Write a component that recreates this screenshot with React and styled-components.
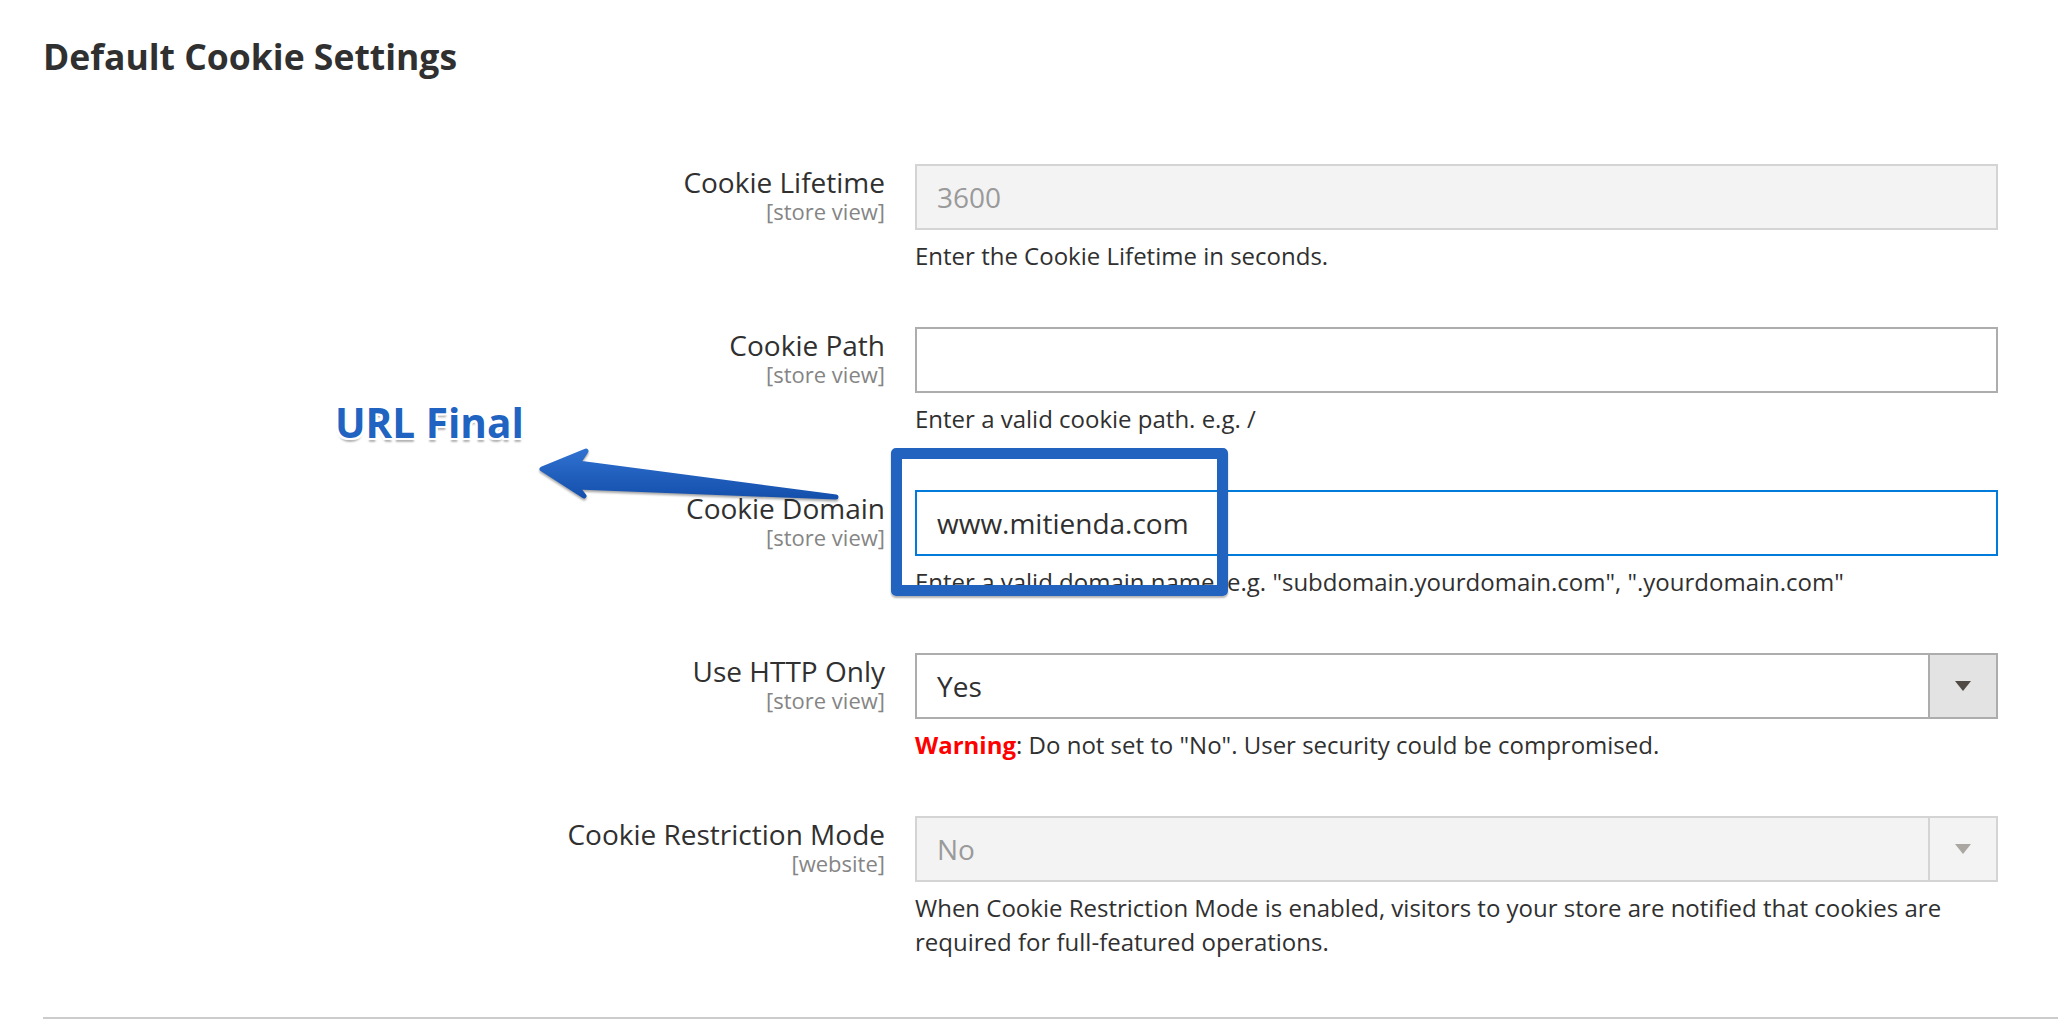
import React from "react";
import styled, { createGlobalStyle, css } from "styled-components";

const GlobalStyle = createGlobalStyle`
  body {
    margin: 0;
    background: #fff;
    font-family: "Open Sans", "Liberation Sans", sans-serif;
    color: #303030;
  }
`;

const fields = [
  {
    label: "Cookie Lifetime",
    scope: "[store view]",
    kind: "input",
    value: "3600",
    state: "disabled",
    note: "Enter the Cookie Lifetime in seconds.",
  },
  {
    label: "Cookie Path",
    scope: "[store view]",
    kind: "input",
    value: "",
    note: "Enter a valid cookie path. e.g. /",
  },
  {
    label: "Cookie Domain",
    scope: "[store view]",
    kind: "input",
    value: "www.mitienda.com",
    state: "focus",
    note: 'Enter a valid domain name. e.g. "subdomain.yourdomain.com", ".yourdomain.com"',
  },
  {
    label: "Use HTTP Only",
    scope: "[store view]",
    kind: "select",
    value: "Yes",
    warning: true,
    note: ': Do not set to "No". User security could be compromised.',
  },
  {
    label: "Cookie Restriction Mode",
    scope: "[website]",
    kind: "select",
    value: "No",
    state: "disabled",
    note: "When Cookie Restriction Mode is enabled, visitors to your store are notified that cookies are required for full-featured operations.",
  },
];

function App() {
  return (
    <Page>
      <GlobalStyle />
      <SectionTitle>Default Cookie Settings</SectionTitle>

      <Fieldset>
        {fields.map((f) => (
          <Field key={f.label}>
            <LabelCol>
              <Label>{f.label}</Label>
              <Scope>{f.scope}</Scope>
            </LabelCol>
            <Control>
              {f.kind === "input" ? (
                <TextInput
                  $state={f.state}
                  value={f.value}
                  readOnly
                  disabled={f.state === "disabled"}
                />
              ) : (
                <SelectBox $disabled={f.state === "disabled"}>
                  <SelectValue>{f.value}</SelectValue>
                  <SelectButton $disabled={f.state === "disabled"}>
                    <Caret $disabled={f.state === "disabled"} />
                  </SelectButton>
                </SelectBox>
              )}
              <Note>
                {f.warning && <Warn>Warning</Warn>}
                {f.note}
              </Note>
            </Control>
          </Field>
        ))}
      </Fieldset>

      <Divider />

      {/* annotation drawn over the screenshot */}
      <Callout>URL Final</Callout>
      <Arrow width="320" height="80" viewBox="0 0 320 80">
        <defs>
          <linearGradient id="arrowFill" x1="0" y1="0" x2="0" y2="1">
            <stop offset="0" stopColor="#2f70cf" />
            <stop offset="1" stopColor="#1550ad" />
          </linearGradient>
        </defs>
        <path
          d="M12,29 L56,11 L48,23 L306,57 L47,47 L54,56 Z"
          fill="url(#arrowFill)"
          stroke="url(#arrowFill)"
          strokeWidth="5"
          strokeLinejoin="round"
        />
      </Arrow>
      <Highlight />
    </Page>
  );
}

export default App;

//! Styled Elements
const Page = styled.div`
  position: relative;
  height: 1034px;
  overflow: hidden;
  padding-left: 43px;
  box-sizing: border-box;
`;

const SectionTitle = styled.h2`
  margin: 0;
  padding-top: 36px;
  font-size: 35.5px;
  line-height: 40px;
  font-weight: 700;
  color: #303030;
`;

const Fieldset = styled.div`
  display: flex;
  flex-direction: column;
  gap: 54px;
  margin-top: 88px;
`;

const Field = styled.div`
  display: grid;
  grid-template-columns: 842px 1083px;
  column-gap: 30px;
  align-items: start;
`;

const LabelCol = styled.div`
  text-align: right;
`;

const Label = styled.div`
  font-size: 28px;
  line-height: 36px;
  color: #303030;
`;

const Scope = styled.div`
  font-size: 22px;
  line-height: 23px;
  color: #858585;
`;

const Control = styled.div`
  display: flex;
  flex-direction: column;
`;

const TextInput = styled.input`
  box-sizing: border-box;
  width: 100%;
  height: 66px;
  margin: 0;
  padding: 0 20px;
  border: 2px solid #adadad;
  border-radius: 0;
  background: #fff;
  font-family: "Open Sans", "Liberation Sans", sans-serif;
  font-size: 28px;
  color: #303030;
  outline: none;

  ${(p) =>
    p.$state === "disabled" &&
    css`
      background: #f3f3f3;
      border-color: #d4d4d4;
      color: #9a9a9a;
      -webkit-text-fill-color: #9a9a9a;
      opacity: 1;
    `}

  ${(p) =>
    p.$state === "focus" &&
    css`
      border-color: #007bdb;
    `}
`;

const SelectBox = styled.div`
  box-sizing: border-box;
  display: flex;
  height: 66px;
  border: 2px solid ${(p) => (p.$disabled ? "#d4d4d4" : "#adadad")};
  background: ${(p) => (p.$disabled ? "#f3f3f3" : "#fff")};
  color: ${(p) => (p.$disabled ? "#9a9a9a" : "#303030")};
`;

const SelectValue = styled.div`
  flex: 1;
  display: flex;
  align-items: center;
  padding: 0 20px;
  font-size: 28px;
`;

const SelectButton = styled.div`
  width: 66px;
  display: flex;
  align-items: center;
  justify-content: center;
  border-left: 2px solid ${(p) => (p.$disabled ? "#d4d4d4" : "#adadad")};
  background: ${(p) => (p.$disabled ? "#f3f3f3" : "#e3e3e3")};
`;

const Caret = styled.span`
  width: 0;
  height: 0;
  border-left: 8px solid transparent;
  border-right: 8px solid transparent;
  border-top: 10px solid ${(p) => (p.$disabled ? "#aaa6a2" : "#514943")};
`;

const Note = styled.div`
  margin-top: 9px;
  font-size: 24px;
  line-height: 34px;
  color: #303030;
`;

const Warn = styled.strong`
  color: #f00;
  font-weight: 700;
`;

const Divider = styled.div`
  height: 2px;
  margin-top: 58px;
  background: #cccccc;
`;

const Callout = styled.div`
  position: absolute;
  left: 335px;
  top: 402px;
  font-size: 40.5px;
  line-height: 41px;
  font-weight: 700;
  color: #2163c1;
  text-shadow:
    2px 0 0 #fff, -2px 0 0 #fff, 0 2px 0 #fff, 0 -2px 0 #fff,
    2px 2px 0 #fff, -2px 2px 0 #fff, 2px -2px 0 #fff, -2px -2px 0 #fff,
    0 4px 2px rgba(0, 0, 0, 0.3);
`;

const Arrow = styled.svg`
  position: absolute;
  left: 530px;
  top: 440px;
  overflow: visible;
  filter: drop-shadow(0 2px 1px rgba(0, 0, 0, 0.35));
`;

const Highlight = styled.div`
  position: absolute;
  left: 891px;
  top: 448px;
  width: 337px;
  height: 148px;
  box-sizing: border-box;
  border: 11px solid #2263bf;
  border-radius: 5px;
  box-shadow: 0 2px 2px rgba(0, 0, 0, 0.3);
`;
